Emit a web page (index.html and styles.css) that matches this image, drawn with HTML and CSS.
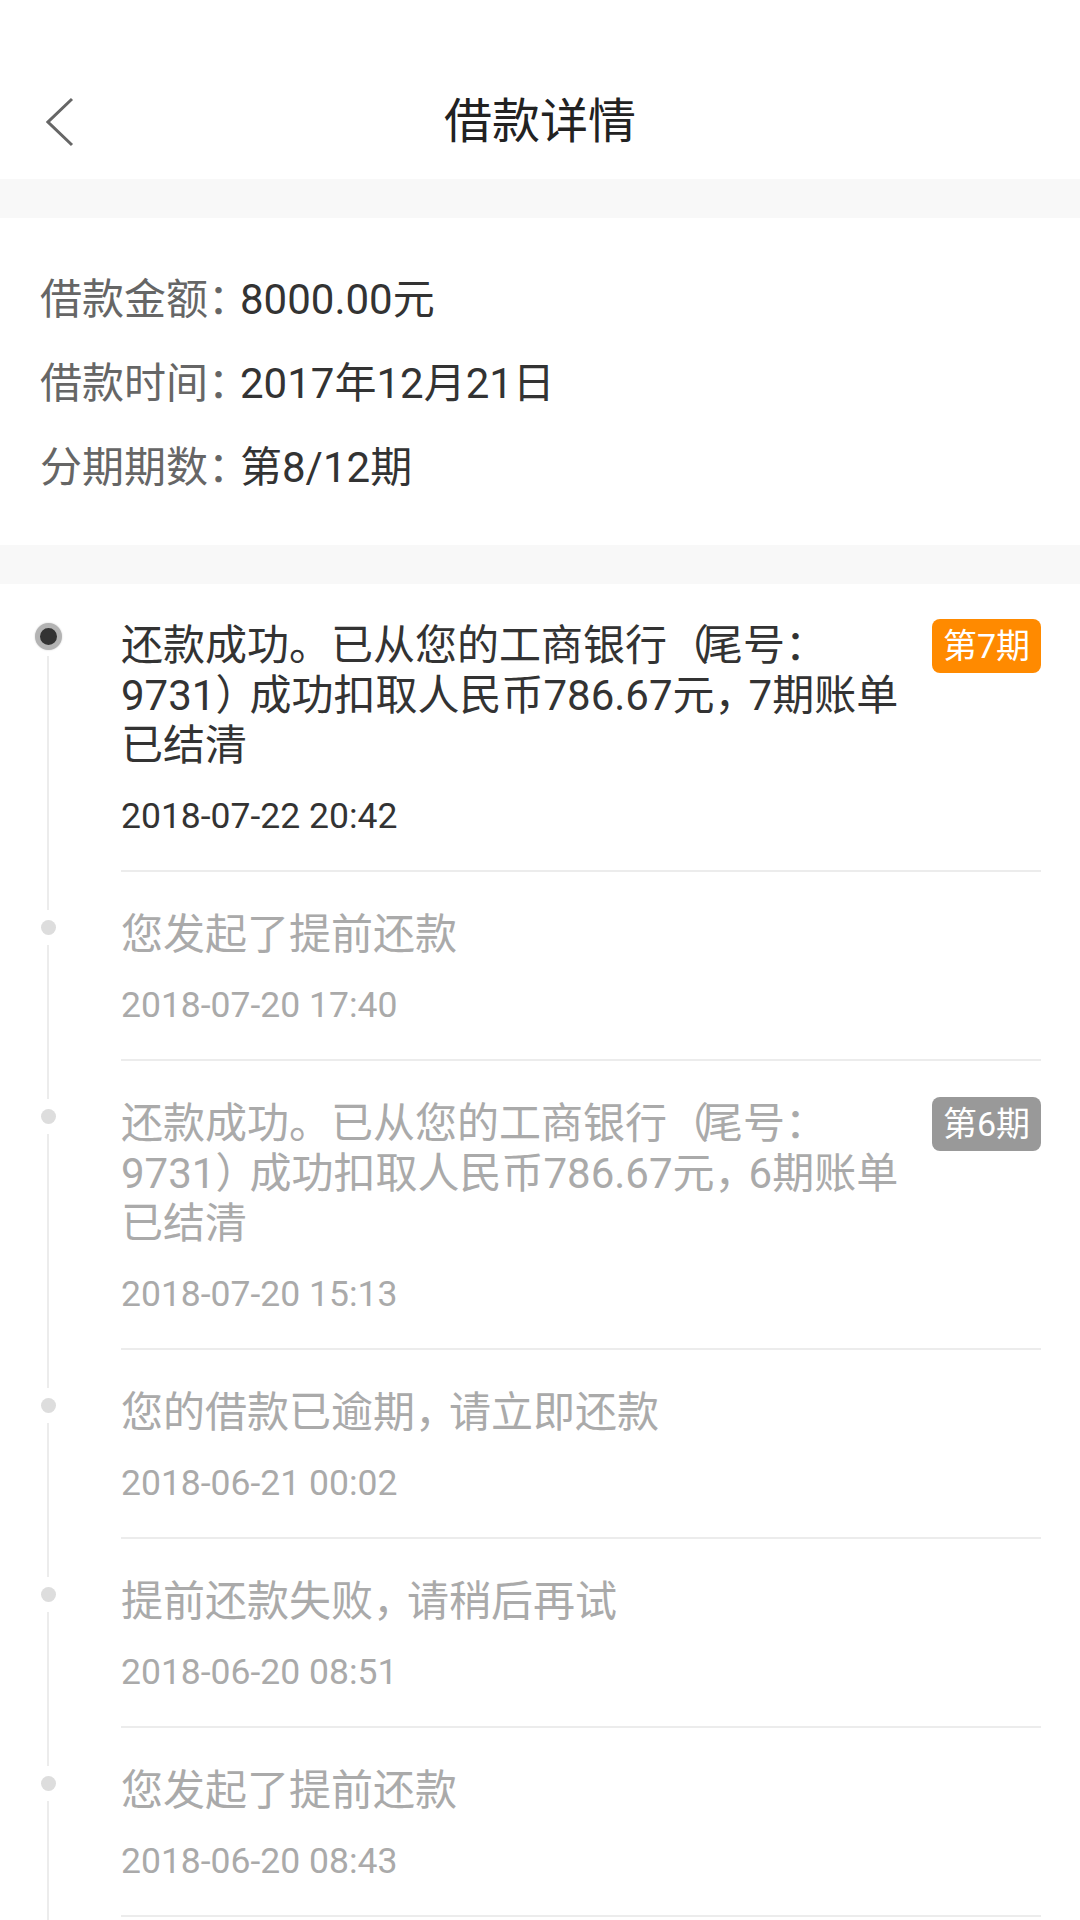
FILE: index.html
```html
<!DOCTYPE html>
<html lang="zh-CN">
<head>
    <meta charset="UTF-8">
    <meta name="viewport" content="width=device-width, initial-scale=1.0">
    <title>借款详情</title>
    <link rel="stylesheet" href="styles.css">
</head>
<body>
    <header class="topbar">
        <a class="back" href="#">
            <svg width="28" height="50" viewBox="0 0 28 50"><path d="M26 2 L2 25 L26 48" fill="none" stroke="#666" stroke-width="3"/></svg>
        </a>
        <h1>借款详情</h1>
        <span></span>
    </header>

    <div class="gap"></div>

    <section class="info">
        <div class="info-row"><span class="info-label">借款金额：</span><span class="info-value">8000.00元</span></div>
        <div class="info-row"><span class="info-label">借款时间：</span><span class="info-value">2017年12月21日</span></div>
        <div class="info-row"><span class="info-label">分期期数：</span><span class="info-value">第8/12期</span></div>
    </section>

    <div class="gap"></div>

    <section class="timeline">
        <div class="event current first">
            <div class="rail"><i class="rail-top"></i><span class="dot"></span><i class="rail-line"></i></div>
            <div class="event-body">
                <div class="event-main">
                    <p class="event-text">还款成功。已从您的工商银行<span class="punct">（</span>尾号：<br>9731<span class="punct">）</span>成功扣取人民币786.67元<span class="punct">，</span>7期账单<br>已结清</p>
                    <span class="badge badge-orange">第7期</span>
                </div>
                <div class="event-time">2018-07-22 20:42</div>
            </div>
        </div>

        <div class="event">
            <div class="rail"><i class="rail-top"></i><span class="dot"></span><i class="rail-line"></i></div>
            <div class="event-body">
                <div class="event-main">
                    <p class="event-text">您发起了提前还款</p>
                </div>
                <div class="event-time">2018-07-20 17:40</div>
            </div>
        </div>

        <div class="event">
            <div class="rail"><i class="rail-top"></i><span class="dot"></span><i class="rail-line"></i></div>
            <div class="event-body">
                <div class="event-main">
                    <p class="event-text">还款成功。已从您的工商银行<span class="punct">（</span>尾号：<br>9731<span class="punct">）</span>成功扣取人民币786.67元<span class="punct">，</span>6期账单<br>已结清</p>
                    <span class="badge badge-gray">第6期</span>
                </div>
                <div class="event-time">2018-07-20 15:13</div>
            </div>
        </div>

        <div class="event">
            <div class="rail"><i class="rail-top"></i><span class="dot"></span><i class="rail-line"></i></div>
            <div class="event-body">
                <div class="event-main">
                    <p class="event-text">您的借款已逾期<span class="punct">，</span>请立即还款</p>
                </div>
                <div class="event-time">2018-06-21 00:02</div>
            </div>
        </div>

        <div class="event">
            <div class="rail"><i class="rail-top"></i><span class="dot"></span><i class="rail-line"></i></div>
            <div class="event-body">
                <div class="event-main">
                    <p class="event-text">提前还款失败<span class="punct">，</span>请稍后再试</p>
                </div>
                <div class="event-time">2018-06-20 08:51</div>
            </div>
        </div>

        <div class="event">
            <div class="rail"><i class="rail-top"></i><span class="dot"></span><i class="rail-line"></i></div>
            <div class="event-body">
                <div class="event-main">
                    <p class="event-text">您发起了提前还款</p>
                </div>
                <div class="event-time">2018-06-20 08:43</div>
            </div>
        </div>

        <div class="event tail">
            <div class="rail"><i class="rail-top"></i></div>
            <div class="event-body"></div>
        </div>
    </section>
</body>
</html>
```

FILE: styles.css
```css
body {
    margin: 0;
    background-color: #fff;
    font-family: Roboto, "Noto Sans CJK SC", sans-serif;
    color: #333;
}
.topbar {
    display: grid;
    grid-template-columns: 1fr auto 1fr;
    align-items: center;
    height: 179px;
    padding-top: 64px;
    box-sizing: border-box;
}
.back {
    display: flex;
    padding-left: 46px;
}
.topbar h1 {
    margin: 0;
    font-size: 48px;
    font-weight: normal;
    color: #222;
    line-height: 60px;
}
.gap {
    height: 39px;
    background-color: #f8f8f8;
}
.info {
    padding: 40px 40px 35px;
}
.info-row {
    display: flex;
    font-size: 42px;
    line-height: 84px;
}
.info-label {
    width: 200px;
    flex-shrink: 0;
    white-space: nowrap;
    color: #666;
}
.info-value {
    color: #333;
}
.event {
    display: flex;
}
.rail {
    width: 96px;
    flex-shrink: 0;
    display: flex;
    flex-direction: column;
    align-items: center;
}
.rail-top {
    width: 2px;
    height: 40px;
    background-color: #ececec;
}
.dot {
    width: 15px;
    height: 15px;
    margin: 10px 0;
    border-radius: 50%;
    background-color: #ddd;
}
.rail-line {
    flex: 1;
    width: 2px;
    background-color: #ececec;
}
.first .rail-top {
    visibility: hidden;
    height: 39px;
}
.first .dot {
    width: 17px;
    height: 17px;
    margin: 0 0 6px;
    background-color: #333;
    border: 5px solid #b3b3b3;
    box-shadow: 0 0 2px #ccc;
}
.event-body {
    flex: 1;
    margin-left: 25px;
    margin-right: 39px;
    padding: 38px 0 32px;
    border-top: 2px solid #ececec;
    color: #aaa;
}
.first .event-body {
    border-top: none;
    padding-top: 37px;
}
.current .event-body {
    color: #333;
}
.tail .event-body {
    padding: 0;
}
.event-main {
    display: flex;
    justify-content: space-between;
    align-items: flex-start;
}
.event-text {
    margin: 0;
    font-size: 42px;
    line-height: 50px;
    white-space: nowrap;
}
.punct {
    letter-spacing: -8px;
}
.badge {
    flex-shrink: 0;
    margin-top: -2px;
    padding: 0 11px;
    height: 54px;
    line-height: 54px;
    border-radius: 8px;
    font-size: 34px;
    color: #fff;
}
.badge-orange {
    background-color: #ff8a00;
}
.badge-gray {
    background-color: #999;
}
.event-time {
    margin-top: 23px;
    font-size: 35.5px;
    line-height: 44px;
}
```
